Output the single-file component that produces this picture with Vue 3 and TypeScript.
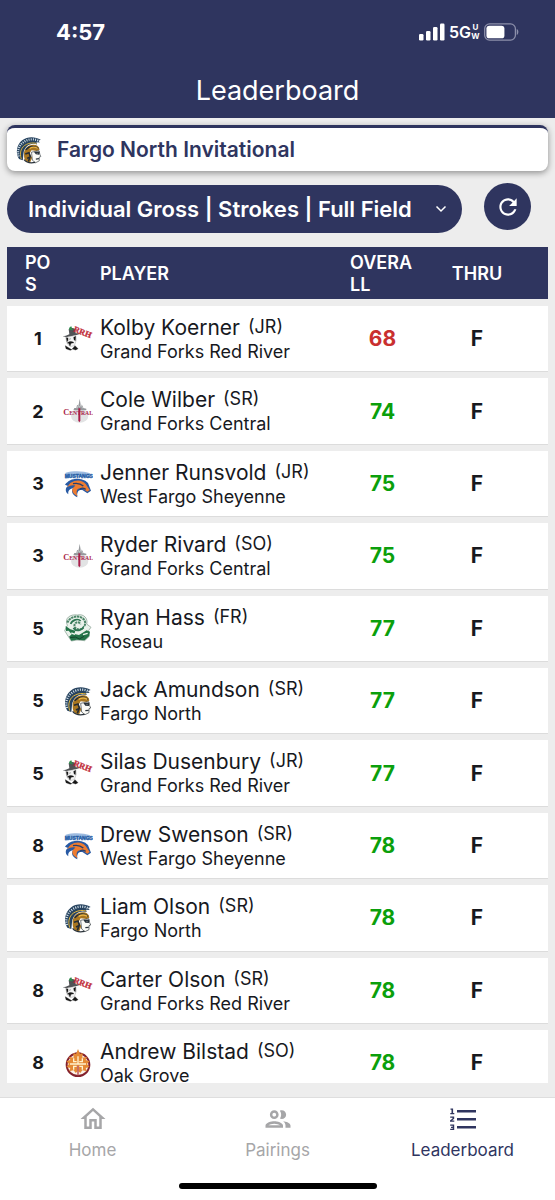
<script setup lang="ts">
import { ref } from 'vue'

type Logo = 'river' | 'central' | 'mustangs' | 'rams' | 'spartan' | 'oak'

interface Player {
  pos: number
  name: string
  grade: string
  school: string
  logo: Logo
  overall: number
  thru: string
}

const PAR = 72

const players: Player[] = [
  { pos: 1, name: 'Kolby Koerner', grade: 'JR', school: 'Grand Forks Red River', logo: 'river', overall: 68, thru: 'F' },
  { pos: 2, name: 'Cole Wilber', grade: 'SR', school: 'Grand Forks Central', logo: 'central', overall: 74, thru: 'F' },
  { pos: 3, name: 'Jenner Runsvold', grade: 'JR', school: 'West Fargo Sheyenne', logo: 'mustangs', overall: 75, thru: 'F' },
  { pos: 3, name: 'Ryder Rivard', grade: 'SO', school: 'Grand Forks Central', logo: 'central', overall: 75, thru: 'F' },
  { pos: 5, name: 'Ryan Hass', grade: 'FR', school: 'Roseau', logo: 'rams', overall: 77, thru: 'F' },
  { pos: 5, name: 'Jack Amundson', grade: 'SR', school: 'Fargo North', logo: 'spartan', overall: 77, thru: 'F' },
  { pos: 5, name: 'Silas Dusenbury', grade: 'JR', school: 'Grand Forks Red River', logo: 'river', overall: 77, thru: 'F' },
  { pos: 8, name: 'Drew Swenson', grade: 'SR', school: 'West Fargo Sheyenne', logo: 'mustangs', overall: 78, thru: 'F' },
  { pos: 8, name: 'Liam Olson', grade: 'SR', school: 'Fargo North', logo: 'spartan', overall: 78, thru: 'F' },
  { pos: 8, name: 'Carter Olson', grade: 'SR', school: 'Grand Forks Red River', logo: 'river', overall: 78, thru: 'F' },
  { pos: 8, name: 'Andrew Bilstad', grade: 'SO', school: 'Oak Grove', logo: 'oak', overall: 78, thru: 'F' },
]

const views = ['Individual Gross | Strokes | Full Field']
const view = ref(views[0])
</script>

<template>
  <div class="app">
    <svg class="sprite" aria-hidden="true">
      <symbol id="logo-spartan" viewBox="-3 0 90 90">
        <path d="M10 74C-2 56 2 28 20 14 38 0 62 2 80 12l-8 3 5 6-11-1 2 7C46 20 26 34 24 58l-2 20z" fill="#27435f" />
        <path d="M9 66c-6-20 2-36 14-45C36 10 56 8 72 15" fill="none" stroke="#d9e6ef" stroke-width="7" stroke-dasharray="3 4" />
        <path d="M17 74C10 52 18 34 34 27c10-5 22-6 32-3" fill="none" stroke="#e0b53e" stroke-width="3" />
        <path d="M26 62c-2-20 12-34 30-34 12 0 19 6 20 16l-8 4-18-2-6 10 8 14-6 14c-12 2-20-6-20-22z" fill="#a87620" />
        <path d="M32 44c10-12 26-14 40-4M30 58l12-4 4 12-6 16M36 72l8-4" fill="none" stroke="#262c33" stroke-width="5" />
        <path d="M44 40c8-5 18-5 26 0" fill="none" stroke="#f0b740" stroke-width="4" />
        <path d="M50 52l24-5 3 12 3 7-5 2v12l-12 6-10-8z" fill="#fbfbf7" stroke="#2c3338" stroke-width="2" />
        <path d="M62 53l12-1-1 6-8-1zM64 74l10-1M26 76c8 10 22 12 36 9" fill="none" stroke="#29323a" stroke-width="4" />
      </symbol>
      <symbol id="logo-river" viewBox="0 -3 90 90">
        <path d="M0 34C5 39 36 33 50 27c-2-4-8-2-12-2l-3-14c-4-4-15-2-18 2l2 15C12 32 4 34 0 34z" fill="#515356" />
        <path d="M18 14c0-6 3-9 7-10l4 12z" fill="#2f8b4e" />
        <path d="M8 37l30-6 2 14-6 17-13 3-9-10z" fill="#f4f4f4" stroke="#888" stroke-width="1" />
        <path d="M10 38l5 1v7l-3 4zM32 37l6-3-1 13-4-3zM18 43l6-2M13 54c5-6 14-6 20-1l-9 2-3 8-4-8zM7 62l11 7 8 5 10-12 9 9-7 4-9-3-7 4-13-5z" fill="#151515" stroke="#151515" stroke-width="1" />
      </symbol>
      <symbol id="logo-central" viewBox="-3 -6 90 90">
        <ellipse cx="47" cy="54" rx="26" ry="20" fill="#e2e3e4" />
        <path d="M31 30h6l2-8 5-2 3-18 3 18 6 3 2 7 9 2v5H28z" fill="#96999c" />
        <path d="M39 31l4-9 4 6 4-9 5 12" fill="none" stroke="#d9dadb" stroke-width="2" />
        <path d="M43 31h6v37l-3 5-3-5z" fill="#a91c48" />
      </symbol>
      <symbol id="logo-mustangs" viewBox="-3 0 90 90">
        <path d="M3 50C16 31 43 27 64 38l8 7 9 23-11 8-15-10c-12-2-17 6-15 22-13-6-20-16-13-27-10 2-16 8-14 18C2 72 4 58 12 54z" fill="#285aa4" />
        <path d="M19 45c18-12 36-9 46 3l12 18-7 5-15-10c-16-3-21 8-14 24-19-11-21-23-7-32-7-3-17-1-25 5z" fill="#ee7c30" />
        <path d="M27 47c14-3 23 0 31 7M47 65c5-7 12-5 18-1" fill="none" stroke="#243f71" stroke-width="4" />
      </symbol>
      <symbol id="logo-rams" viewBox="-3 -3 90 90">
        <path d="M10 34C0 12 19 0 40 3c20-5 33 12 28 27l13 10-7 9 2 18-14 13-23-2-17 3L10 63 2 50z" fill="#e9f1ea" stroke="#7c9788" stroke-width="2" />
        <path d="M10 26c8-20 38-25 51-8 6 10 1 25-13 28-14 2-21-10-14-18 6-6 14-2 15 3" fill="none" stroke="#4c8568" stroke-width="6" stroke-dasharray="7 2" />
        <path d="M20 30c4-12 22-18 30-9M28 42c8 12 26 8 32-4" fill="none" stroke="#2d7552" stroke-width="5" />
        <path d="M5 36l14 10 15 4-3 10 14 3 23-14 10 4-3 14-13 12-24-2-16 3-7-12 8-7-9-11-8 1z" fill="#237348" />
        <path d="M22 57l11 4M57 62l14-4M60 40l8 5" stroke="#eff6ef" stroke-width="4" />
        <path d="M18 71l16-2 12 6 14-8" fill="none" stroke="#14452d" stroke-width="3" />
      </symbol>
      <symbol id="logo-oak" viewBox="-7 -3 90 90">
        <circle cx="38" cy="47" r="34" fill="#fbf3e8" stroke="#83212d" stroke-width="6" />
        <path d="M38 0l6 15 8-3-1 14 14-3-4 10 12 4-8 8 8 9-12 3 4 10-14-3-6 8-7-6-7 6-6-8-14 3 4-10-12-3 8-9-8-8 12-4-4-10 14 3-1-14 8 3z" fill="#e58a35" />
        <path d="M38 22v22M14 45h48M25 28v10h9M51 28v10h-9M25 62V52h9M51 62V52h-9" fill="none" stroke="#fff3cf" stroke-width="4" />
        <path d="M38 50v29" stroke="#c4686a" stroke-width="5" />
      </symbol>
    </svg>

    <header class="top">
      <div class="status">
        <span class="clock">4:57</span>
        <span class="signals">
          <svg class="bars" viewBox="0 0 26 18" aria-hidden="true">
            <rect x="0" y="11" width="4.5" height="6.5" rx="1.2" />
            <rect x="7" y="8" width="4.5" height="9.5" rx="1.2" />
            <rect x="14" y="4" width="4.5" height="13.5" rx="1.2" />
            <rect x="21" y="0.5" width="4.5" height="17" rx="1.2" />
          </svg>
          <span class="network">5G</span>
          <span class="band"><span>U</span><span>W</span></span>
          <svg class="battery" viewBox="0 0 36 18" aria-hidden="true">
            <rect x="0.7" y="0.7" width="31.6" height="16.6" rx="5" fill="none" stroke="#8d90ab" stroke-width="1.3" />
            <rect x="2.5" y="2.5" width="18.5" height="13" rx="3" fill="#fff" />
            <path d="M33.7 6c2.2.7 2.2 5.300 0 6z" fill="#8d90ab" />
          </svg>
        </span>
      </div>
      <h1>Leaderboard</h1>
    </header>

    <main>
      <section class="event">
        <svg class="event-logo" aria-hidden="true"><use href="#logo-spartan" /></svg>
        <h2>Fargo North Invitational</h2>
      </section>

      <div class="filters">
        <div class="picker">
          <select v-model="view" aria-label="Leaderboard view">
            <option v-for="v in views" :key="v" :value="v">{{ v }}</option>
          </select>
          <svg class="chevron" viewBox="0 0 12 12" aria-hidden="true"><path d="M1.500 3.500L6 8l4.500-4.500" fill="none" stroke="#fff" stroke-width="1.500" /></svg>
        </div>
        <button class="refresh" type="button" aria-label="Refresh">
          <svg viewBox="0 0 24 24" aria-hidden="true"><path d="M17.650 6.350C16.200 4.900 14.210 4 12 4c-4.420 0-7.990 3.580-7.990 8s3.570 8 7.990 8c3.730 0 6.840-2.550 7.730-6h-2.080c-.82 2.330-3.040 4-5.650 4-3.310 0-6-2.690-6-6s2.690-6 6-6c1.660 0 3.140.69 4.220 1.780L13 11h7V4z" fill="#fff" /></svg>
        </button>
      </div>

      <div class="scroller">
        <table>
          <thead>
            <tr>
              <th class="pos" scope="col">POS</th>
              <th class="logo" scope="col" aria-label="School"></th>
              <th class="player" scope="col">PLAYER</th>
              <th class="overall" scope="col">OVERALL</th>
              <th class="thru" scope="col">THRU</th>
            </tr>
          </thead>
          <tbody>
            <tr v-for="p in players" :key="p.name">
              <td class="pos">{{ p.pos }}</td>
              <td class="logo">
                <svg class="team" viewBox="0 0 90 90" aria-hidden="true">
                  <use :href="'#logo-' + p.logo" width="90" height="90" />
                  <text v-if="p.logo === 'river'" class="serif red" x="30" y="22" font-size="25" transform="rotate(21 30 22)">RRH</text>
                  <text v-else-if="p.logo === 'central'" class="serif crimson" x="1" y="57" font-size="20"><tspan font-size="25">C</tspan><tspan font-size="17">ENTRAL</tspan></text>
                  <template v-else-if="p.logo === 'mustangs'">
                    <path d="M8 14c22-6 52-6 74 2l-1 14c-22-4-52-4-74 2z" fill="#9dbbe0" />
                    <text class="sans blue" x="5" y="29" font-size="15">MUSTANGS</text>
                  </template>
                </svg>
              </td>
              <td class="player">
                <div class="who"><span class="name">{{ p.name }}</span><span class="grade">({{ p.grade }})</span></div>
                <div class="school">{{ p.school }}</div>
              </td>
              <td class="overall" :class="p.overall < PAR ? 'under' : 'over'">{{ p.overall }}</td>
              <td class="thru">{{ p.thru }}</td>
            </tr>
          </tbody>
        </table>
      </div>
    </main>

    <nav>
      <a href="#home">
        <svg viewBox="0 0 24 24" aria-hidden="true"><path d="M12 5.690l5 4.500V18h-2v-6H9v6H7v-7.810zM12 3L2 12h3v8h6v-6h2v6h6v-8h3z" /></svg>
        <span>Home</span>
      </a>
      <a href="#pairings">
        <svg viewBox="0 0 24 24" aria-hidden="true"><path d="M9 13.750c-2.340 0-7 1.170-7 3.500V19h14v-1.750c0-2.330-4.660-3.500-7-3.500zM4.340 17c.84-.58 2.870-1.250 4.660-1.250s3.820.67 4.660 1.250zM9 12c1.930 0 3.500-1.570 3.500-3.500S10.930 5 9 5 5.500 6.570 5.500 8.500 7.070 12 9 12zm0-5c.83 0 1.500.67 1.500 1.500S9.830 10 9 10s-1.500-.67-1.500-1.500S8.170 7 9 7zm7.040 6.810c1.160.84 1.960 1.960 1.960 3.440V19h4v-1.750c0-2.020-3.500-3.170-5.960-3.440zM15 12c1.930 0 3.500-1.570 3.500-3.500S16.930 5 15 5c-.54 0-1.040.13-1.500.35.63.89 1 1.980 1 3.150s-.37 2.260-1 3.150c.46.22.96.35 1.500.35z" /></svg>
        <span>Pairings</span>
      </a>
      <a class="active" href="#leaderboard" aria-current="page">
        <svg viewBox="0 0 30 30" aria-hidden="true">
          <path d="M9 6h19v2.500H9zM9 14h19v2.500H9zM9 22h19v2.500H9zM2.500 4.500h2.600V9h1.200v1.300H2.300V9h1.200V5.800h-1zM2.200 12.500h4v2.300l-2.100 1.700h2.200v1.300H2v-1.400l2.500-2v-.6H2.200zM2.200 20.500h4V26h-4v-1.300h2.500v-.8H3v-1.200h1.700v-.9H2.200z" />
        </svg>
        <span>Leaderboard</span>
      </a>
    </nav>
    <div class="home-bar"><span></span></div>
  </div>
</template>

<style>
body {
  margin: 0;
  background: #ededed;
}
</style>

<style scoped>
.app {
  --navy: #2f355f;
  box-sizing: border-box;
  display: flex;
  flex-direction: column;
  height: 100vh;
  overflow: hidden;
  background: #ededed;
  color: #17191e;
  font-family: Inter, "Liberation Sans", sans-serif;
}
.sprite {
  position: absolute;
  width: 0;
  height: 0;
}
.top {
  height: 118px;
  flex: none;
  background: var(--navy);
  color: #fff;
}
.status {
  display: flex;
  align-items: center;
  justify-content: space-between;
  height: 64px;
  padding: 0 36px 0 56px;
}
.clock {
  font-size: 22px;
  font-weight: 700;
}
.signals {
  display: flex;
  align-items: center;
}
.bars {
  width: 26px;
  height: 18px;
  fill: #fff;
}
.network {
  margin-left: 4px;
  font-size: 16px;
  font-weight: 600;
}
.band {
  display: flex;
  flex-direction: column;
  width: 9px;
  align-items: center;
  font-size: 8px;
  font-weight: 700;
  line-height: 9px;
}
.battery {
  width: 35px;
  height: 18px;
  margin-left: 4px;
}
h1 {
  margin: 0;
  font-size: 27px;
  font-weight: 400;
  line-height: 53px;
  text-align: center;
}
main {
  display: flex;
  flex: 1;
  flex-direction: column;
  min-height: 0;
  padding: 7px 7px 14px;
}
.event {
  display: flex;
  flex: none;
  align-items: center;
  gap: 14px;
  box-sizing: border-box;
  height: 46px;
  padding: 0 8px;
  border-top: 3px solid var(--navy);
  border-radius: 8px;
  background: #fff;
  box-shadow: 0 2px 6px rgb(0 0 0 / 40%);
}
.event-logo {
  width: 28px;
  height: 30px;
}
h2 {
  margin: 0;
  color: var(--navy);
  font-size: 21px;
  font-weight: 600;
}
.filters {
  display: flex;
  flex: none;
  align-items: flex-start;
  gap: 22px;
  padding: 12px 17px 0 0;
}
.picker {
  position: relative;
  flex: 1;
  margin-top: 2px;
}
select {
  display: block;
  width: 100%;
  height: 48px;
  padding: 0 40px 0 21px;
  border: 0;
  border-radius: 24px;
  appearance: none;
  background: var(--navy);
  color: #fff;
  font: 600 22px Inter, "Liberation Sans", sans-serif;
}
.chevron {
  position: absolute;
  top: 18px;
  right: 15px;
  width: 12px;
  height: 12px;
  pointer-events: none;
}
.refresh {
  display: grid;
  place-items: center;
  width: 47px;
  height: 47px;
  padding: 0;
  border: 0;
  border-radius: 50%;
  background: var(--navy);
}
.refresh svg {
  width: 26px;
  height: 26px;
}
.scroller {
  flex: 1;
  min-height: 0;
  margin-top: 7px;
  overflow-y: auto;
  scrollbar-width: none;
}
table {
  width: 100%;
  border-spacing: 0 7px;
  table-layout: fixed;
}
th,
td {
  box-sizing: border-box;
  padding: 0;
}
thead th {
  padding-top: 5px;
  padding-bottom: 3px;
  background: var(--navy);
  color: #fff;
  font-size: 18px;
  font-weight: 600;
  line-height: 22px;
  text-align: left;
  word-break: break-all;
}
td {
  background: #fff;
  box-shadow: 0 1px 0 #dcdcdc;
  text-align: center;
}
.pos {
  width: 53px;
  padding-right: 9px;
  padding-left: 18px;
}
td.pos {
  font-size: 18px;
  font-weight: 700;
}
.logo {
  width: 40px;
}
td.logo {
  padding-left: 3px;
  text-align: left;
}
.team {
  display: block;
  width: 30px;
  height: 30px;
}
.serif {
  font-family: "Liberation Serif", serif;
  font-weight: 700;
}
.sans {
  font-family: "Liberation Sans", sans-serif;
  font-weight: 700;
}
.red {
  fill: #c12b39;
  stroke: #c12b39;
}
.crimson {
  fill: #a91c48;
}
.blue {
  fill: #255da5;
  stroke: #255da5;
}
td.player {
  padding-top: 10px;
  padding-bottom: 8px;
  text-align: left;
  white-space: nowrap;
}
.who {
  display: flex;
  gap: 8px;
  line-height: 24px;
}
.name {
  font-size: 21px;
  font-weight: 400;
}
.grade {
  font-size: 18px;
  line-height: 22px;
}
.school {
  font-size: 18px;
  line-height: 1.3;
}
.overall {
  width: 99px;
  padding-right: 17px;
  padding-left: 17px;
}
td.overall,
td.thru {
  font-size: 21px;
  font-weight: 700;
}
.under {
  color: #c9302f;
}
.over {
  color: #0b9f0b;
}
.thru {
  width: 116px;
  padding-right: 26px;
}
thead .thru {
  text-align: center;
}
nav {
  display: grid;
  flex: none;
  grid-template-columns: repeat(3, 1fr);
  height: 77px;
  border-top: 1px solid #dedede;
  background: #fff;
}
nav a {
  display: flex;
  flex-direction: column;
  align-items: center;
  gap: 5px;
  padding-top: 6px;
  color: #a6a6a8;
  font-size: 17px;
  line-height: 22px;
  text-decoration: none;
}
nav svg {
  width: 30px;
  height: 30px;
  fill: currentColor;
}
nav a.active {
  color: var(--navy);
}
.home-bar {
  display: flex;
  flex: none;
  justify-content: center;
  height: 25px;
  background: #fff;
}
.home-bar span {
  width: 198px;
  height: 6px;
  margin-top: 8px;
  border-radius: 3px;
  background: #000;
}
</style>
